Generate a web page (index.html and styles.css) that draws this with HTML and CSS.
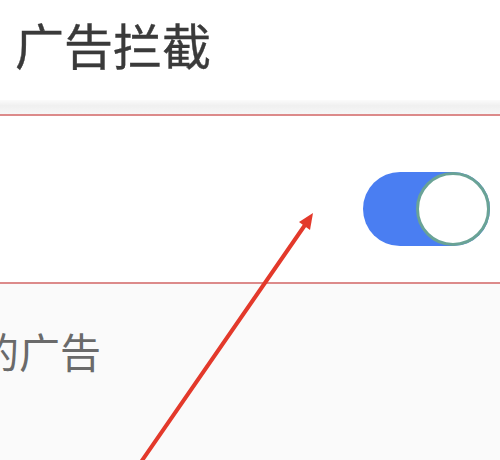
FILE: index.html
```html
<!DOCTYPE html>
<html lang="zh">
<head>
<meta charset="utf-8">
<link rel="stylesheet" href="styles.css">
</head>
<body>
<div class="page">
  <header class="header">
    <h1 class="title">广告拦截</h1>
  </header>
  <div class="shade"></div>
  <div class="redline"></div>
  <div class="row">
    <div class="switch"><div class="knob"></div></div>
  </div>
  <div class="redline"></div>
  <div class="desc">的广告</div>
  <svg class="arrow" width="500" height="460" viewBox="0 0 500 460">
    <line x1="141" y1="462" x2="305" y2="225" stroke="#e3392b" stroke-width="4" stroke-linecap="round"/>
    <polygon points="313,213 299,222 310,230" fill="#e3392b"/>
  </svg>
</div>
</body>
</html>
```
FILE: styles.css
```css
html, body {
  margin: 0;
  padding: 0;
  background: #fafafa;
  font-family: "Noto Sans CJK SC", "Noto Sans", sans-serif;
}
.page {
  position: relative;
  width: 500px;
  height: 460px;
  overflow: hidden;
}
.header {
  height: 100px;
  background: #fff;
  padding-left: 15px;
  display: flex;
  align-items: center;
  box-sizing: border-box;
  padding-bottom: 14px;
}
.title {
  margin: 0;
  font-size: 49px;
  font-weight: 400;
  color: #3a3a3a;
  -webkit-text-stroke: 0.4px #3a3a3a;
}
.shade {
  height: 14px;
  background: linear-gradient(#fbfbfb, #f0f0f0 40%, #f6f6f6);
}
.redline {
  height: 2px;
  background: #dc8a8a;
}
.row {
  height: 166px;
  background: #fff;
  display: flex;
  align-items: center;
  justify-content: flex-end;
  padding-right: 10px;
  padding-top: 20px;
  box-sizing: border-box;
}
.switch {
  width: 127px;
  height: 74px;
  border-radius: 37px;
  background: #4a7ef2;
  display: flex;
  justify-content: flex-end;
  align-items: center;
}
.knob {
  width: 74px;
  height: 74px;
  border-radius: 50%;
  background: #fff;
  border: 3px solid #6aa396;
  box-sizing: border-box;
}
.desc {
  margin-left: -22px;
  padding-top: 40px;
  font-size: 41px;
  color: #6a6a6a;
  line-height: 1.3;
}
.arrow {
  position: absolute;
  left: 0;
  top: 0;
}
```
